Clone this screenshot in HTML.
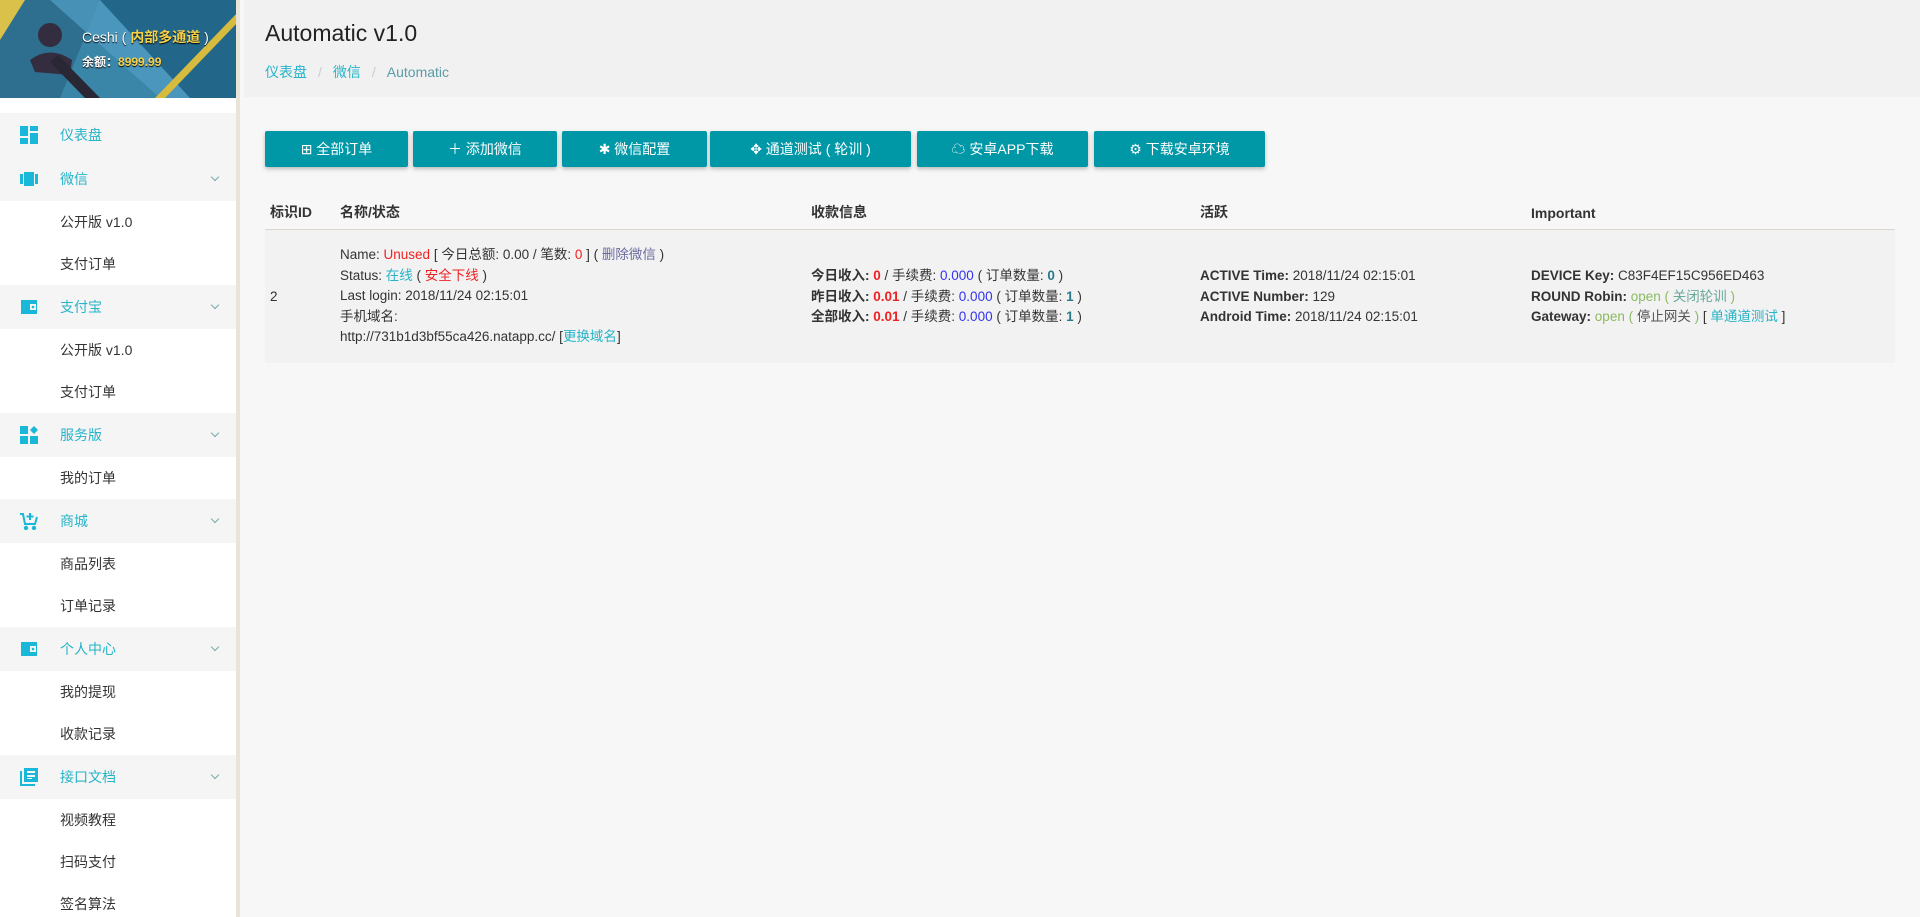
<!DOCTYPE html>
<html><head><meta charset="utf-8"><style>
*{margin:0;padding:0;box-sizing:border-box}
body{width:1920px;height:917px;overflow:hidden;background:#f7f7f7;font-family:"Liberation Sans","Noto Sans CJK SC",sans-serif;font-size:14px;color:#333;position:relative}
#side{position:absolute;left:0;top:0;width:240px;height:917px;background:#fff;border-right:4px solid #e8e4d8;overflow:hidden}
#side .hd{height:98px;position:relative;overflow:hidden}
.g{height:44px;background:#f5f5f5;color:#26b4c9;position:relative;line-height:44px;padding-left:60px;font-size:14px}
.s{height:42px;line-height:42px;padding-left:60px;color:#333;font-size:14px}
.g .ic{position:absolute;left:20px;top:13px;width:18px;height:18px}
.g .ar{position:absolute;left:212px;top:17px;width:6px;height:6px;border-right:1.5px solid #7aa;border-bottom:1.5px solid #7aa;transform:rotate(45deg)}
#main{position:absolute;left:244px;top:0;right:0}
.top{height:97px;background:#f1f1f1;padding-left:21px}
h1{font-weight:normal;font-size:23px;padding-top:19px;color:#222;line-height:28px}
.bc{margin-top:15px;color:#26b4c9;font-size:14px;line-height:20px}
.bc span{color:#ccc;margin:0 11px}
.bc b{font-weight:normal;color:#5a9ca6}
.btn{position:absolute;top:131px;height:36px;background:#0097a7;color:#fff;line-height:36px;font-size:14px;text-align:center;box-shadow:0 2px 4px rgba(0,0,0,.25);border-radius:2px}
.th{position:absolute;top:202px;font-weight:bold;font-size:14px;color:#333;line-height:20px;height:20px}
.row{position:absolute;left:265px;top:229px;width:1630px;height:134px;background:#f2f2f2;border-top:1px solid #ddd4cc}
.c{position:absolute;font-size:13.5px;line-height:20.6px;color:#333}
.r{color:#e22}.t{color:#26b4c9}.gr{color:#8bbb60}.bl{color:#33e}.o{color:#6a9}
</style></head><body>
<div id="side">
<div class="hd">
<svg width="240" height="98" viewBox="0 0 240 98">
<rect width="240" height="98" fill="#3a86a8"/>
<polygon points="0,0 100,0 60,98 0,98" fill="#2e6e8e"/>
<polygon points="50,0 120,0 240,98 160,98" fill="#4f9ac0" opacity=".8"/>
<polygon points="0,0 25,0 0,40" fill="#d9c14a"/>
<polygon points="100,0 240,0 240,98 190,98" fill="#22678a"/>
<polygon points="240,10 240,20 165,98 155,98" fill="#d6bb3e"/>
<circle cx="50" cy="35" r="12" fill="#332d3f"/>
<path d="M30 60 Q50 45 72 60 L70 75 L35 72 Z" fill="#332d3f"/>
<path d="M58 55 L100 98 L85 98 L50 62Z" fill="#2a2735"/>
</svg>
<div style="position:absolute;left:82px;top:27px;color:#fff;font-size:14px;text-shadow:0 1px 1px #000">Ceshi ( <span style="color:#f5d24a;font-weight:bold">内部多通道</span> )</div>
<div style="position:absolute;left:82px;top:53px;color:#fff;font-size:12px;font-weight:bold;text-shadow:0 1px 1px #000">余额：<span style="color:#f5d24a">8999.99</span></div>
</div>
<div style="height:15px"></div>
<div class="g"><svg class="ic" viewBox="0 0 18 18" fill="#1ab8d8"><rect x="0" y="0" width="8" height="10"/><rect x="10" y="0" width="8" height="5"/><rect x="10" y="7" width="8" height="11"/><rect x="0" y="12" width="8" height="6"/></svg>仪表盘</div>
<div class="g"><svg class="ic" viewBox="0 0 18 18" fill="#1ab8d8"><rect x="0" y="4" width="3" height="10"/><rect x="4" y="2" width="10" height="14"/><rect x="15" y="4" width="3" height="10"/></svg>微信<i class="ar"></i></div>
<div class="s">公开版 v1.0</div><div class="s">支付订单</div>
<div class="g"><svg class="ic" viewBox="0 0 18 18" fill="#1ab8d8"><path d="M1 2h16v14H1z M10 6v6h6V6z" fill-rule="evenodd"/><circle cx="13" cy="9" r="1.3"/></svg>支付宝<i class="ar"></i></div>
<div class="s">公开版 v1.0</div><div class="s">支付订单</div>
<div class="g"><svg class="ic" viewBox="0 0 18 18" fill="#1ab8d8"><rect x="0" y="0" width="8" height="8"/><rect x="0" y="10" width="8" height="8"/><rect x="10" y="10" width="8" height="8"/><path d="M14 0l4 4-4 4-4-4z"/></svg>服务版<i class="ar"></i></div>
<div class="s">我的订单</div>
<div class="g"><svg class="ic" viewBox="0 0 18 18" fill="none" stroke="#1ab8d8" stroke-width="2"><path d="M0 2h3l2 10h10l2-7"/><path d="M10 1v7M6.5 4.5h7"/><circle cx="6" cy="16" r="1.2" fill="#1ab8d8"/><circle cx="14" cy="16" r="1.2" fill="#1ab8d8"/></svg>商城<i class="ar"></i></div>
<div class="s">商品列表</div><div class="s">订单记录</div>
<div class="g"><svg class="ic" viewBox="0 0 18 18" fill="#1ab8d8"><path d="M1 2h16v14H1z M10 6v6h6V6z" fill-rule="evenodd"/><circle cx="13" cy="9" r="1.3"/></svg>个人中心<i class="ar"></i></div>
<div class="s">我的提现</div><div class="s">收款记录</div>
<div class="g"><svg class="ic" viewBox="0 0 18 18" fill="#1ab8d8"><path d="M0 3v15h15v-2H2V3z"/><path d="M4 0h14v14H4z M7 3v2h8V3z M7 7v2h8V7z M7 11h5v-1H7z" fill-rule="evenodd"/></svg>接口文档<i class="ar"></i></div>
<div class="s">视频教程</div><div class="s">扫码支付</div><div class="s">签名算法</div>
</div>
<div id="main">
<div class="top"><h1>Automatic v1.0</h1><div class="bc">仪表盘<span>/</span>微信<span>/</span><b>Automatic</b></div></div>
</div>
<div class="btn" style="left:265px;width:143px">⊞ 全部订单</div>
<div class="btn" style="left:413px;width:144px">＋ 添加微信</div>
<div class="btn" style="left:562px;width:145px">✱ 微信配置</div>
<div class="btn" style="left:710px;width:201px">✥ 通道测试 ( 轮训 )</div>
<div class="btn" style="left:917px;width:171px">☁ 安卓APP下载</div>
<div class="btn" style="left:1094px;width:171px">⚙ 下载安卓环境</div>
<div class="th" style="left:270px">标识ID</div>
<div class="th" style="left:340px">名称/状态</div>
<div class="th" style="left:811px">收款信息</div>
<div class="th" style="left:1200px">活跃</div>
<div class="th" style="left:1531px;top:203px">Important</div>
<div class="row">
<div class="c" style="left:5px;top:57px">2</div>
<div class="c" style="left:75px;top:15px">Name: <span class="r">Unused</span> [ 今日总额: 0.00 / 笔数: <span class="r">0</span> ] ( <span style="color:#6a6aa0">删除微信</span> )<br>Status: <span class="t">在线</span> ( <span class="r">安全下线</span> )<br>Last login: 2018/11/24 02:15:01<br>手机域名:<br>http://731b1d3bf55ca426.natapp.cc/ [<span class="t">更换域名</span>]</div>
<div class="c" style="left:546px;top:36px"><b>今日收入: <span class="r">0</span></b> / 手续费: <span class="bl">0.000</span> ( 订单数量: <b style="color:#2a7a8a">0</b> )<br><b>昨日收入: <span class="r">0.01</span></b> / 手续费: <span class="bl">0.000</span> ( 订单数量: <b style="color:#2a7a8a">1</b> )<br><b>全部收入: <span class="r">0.01</span></b> / 手续费: <span class="bl">0.000</span> ( 订单数量: <b style="color:#2a7a8a">1</b> )</div>
<div class="c" style="left:935px;top:36px"><b>ACTIVE Time:</b> 2018/11/24 02:15:01<br><b>ACTIVE Number:</b> 129<br><b>Android Time:</b> 2018/11/24 02:15:01</div>
<div class="c" style="left:1266px;top:36px"><b>DEVICE Key:</b> C83F4EF15C956ED463<br><b>ROUND Robin:</b> <span class="gr">open ( <span class="o">关闭轮训</span> )</span><br><b>Gateway:</b> <span class="gr">open ( <span style="color:#555">停止网关</span> )</span> [ <span class="t">单通道测试</span> ]</div>
</div>
</body></html>
